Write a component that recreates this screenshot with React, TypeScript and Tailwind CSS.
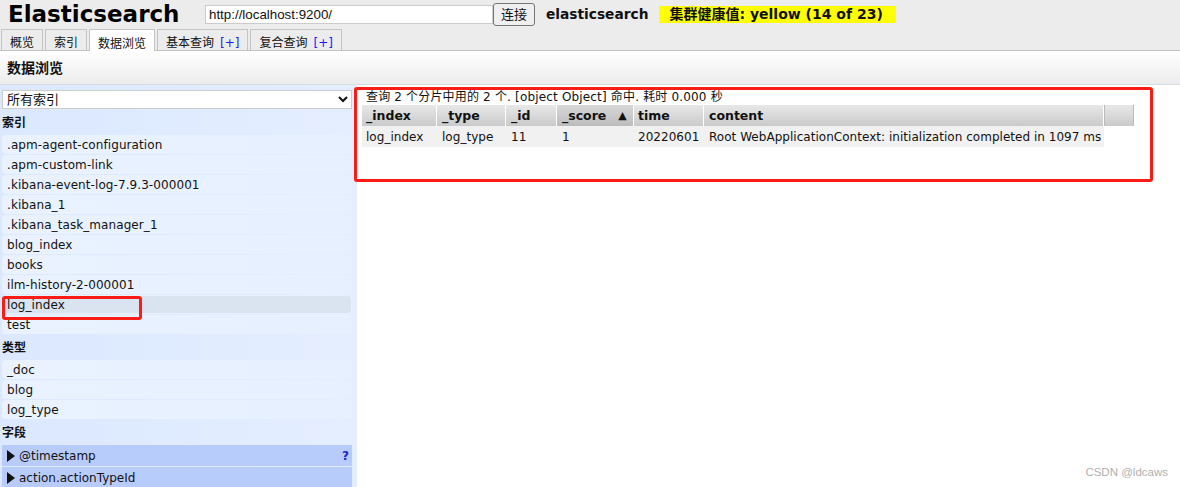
const sans = "font-['DejaVu_Sans','Noto_Sans_CJK_SC',sans-serif]";

const indices = [
  ".apm-agent-configuration",
  ".apm-custom-link",
  ".kibana-event-log-7.9.3-000001",
  ".kibana_1",
  ".kibana_task_manager_1",
  "blog_index",
  "books",
  "ilm-history-2-000001",
  "log_index",
  "test",
];
const types = ["_doc", "blog", "log_type"];

function Tab({ label, plus, active }: { label: string; plus?: boolean; active?: boolean }) {
  return (
    <div
      className={`h-[21px] pt-[6px] px-[8px] border border-b-0 border-[#c4c4c4] flex items-center text-[12px] leading-none ${
        active ? "bg-white h-[22px] -mb-px z-10" : "bg-[#ececec]"
      }`}
    >
      {label}
      {plus && <span className="ml-[6px] text-[#1a1aff]">[+]</span>}
    </div>
  );
}

function ListItem({ name, active }: { name: string; active?: boolean }) {
  return (
    <div
      className={`h-[19px] ml-[2px] mr-[5px] mb-px flex items-center rounded-[4px] text-[12px] tracking-[0.08px] ${
        active ? "pl-[4px] bg-[#dae4f0] border border-[#e9f1fd]" : "pl-[5px] bg-gradient-to-r from-[#eaf2ff] to-[#e6f0ff]"
      }`}
    >
      {name}
    </div>
  );
}

function SectionTitle({ children }: { children: string }) {
  return <div className="h-[23px] pl-[2px] pb-[2px] flex items-center text-[12px] font-bold">{children}</div>;
}

function FieldRow({ name, help }: { name: string; help?: boolean }) {
  return (
    <div className="h-[21px] ml-[2px] mr-[5px] mb-[1px] bg-[#b8ccfc] flex items-center pl-[5px] pr-[3px] text-[12px]">
      <svg width="8" height="12" viewBox="0 0 8 12" className="mr-[4px] shrink-0">
        <path d="M0 0L8 6L0 12Z" fill="#111" />
      </svg>
      <span className="flex-1">{name}</span>
      {help && <span className="text-[#2222cc] font-bold">?</span>}
    </div>
  );
}

const headers = [
  { label: "_index", w: "w-[74px] pl-[4px]" },
  { label: "_type", w: "w-[68px] pl-[5px]" },
  { label: "_id", w: "w-[50px] pl-[5px]" },
  { label: "_score", w: "w-[76px] pl-[5px]", sorted: true },
  { label: "time", w: "w-[69px] pl-[4px]" },
  { label: "content", w: "w-[399px] pl-[5px]" },
];
const cells = ["log_index", "log_type", "11", "1", "20220601", "Root WebApplicationContext: initialization completed in 1097 ms"];

export default function App() {
  return (
    <div className={`relative w-[1180px] h-[487px] overflow-hidden bg-white text-[#111] ${sans}`}>
      {/* Header */}
      <div className="h-[51px] bg-[#ececec] border-b border-[#c4c4c4] flex flex-col">
        <div className="h-[30px] flex items-center">
          <h1 className="pl-[8px] w-[205px] text-[23px] leading-none font-bold text-black font-['DejaVu_Sans',sans-serif]">
            Elasticsearch
          </h1>
          <input
            readOnly
            value="http://localhost:9200/"
            className="w-[288px] h-[19px] bg-white border border-[#cccccc] px-[3px] text-[13.33px] font-['Liberation_Sans',sans-serif] outline-none"
          />
          <button className="w-[42px] h-[23px] bg-[#efefef] border border-[#767676] rounded-[3px] text-[13px]">
            连接
          </button>
          <span className="ml-[11px] text-[13.75px] font-bold">elasticsearch</span>
          <span className="ml-[11px] h-[17px] w-[237px] bg-[#ffff00] pl-[10px] flex items-center text-[14px] font-bold whitespace-pre">
            集群健康值: yellow (14 of 23)
          </span>
        </div>
        <div className="flex gap-[2px] pl-[1px] items-end mt-auto">
          <Tab label="概览" />
          <Tab label="索引" />
          <Tab label="数据浏览" active />
          <Tab label="基本查询" plus />
          <Tab label="复合查询" plus />
        </div>
      </div>

      {/* Title bar */}
      <div className="h-[34px] pl-[7px] pt-[2px] flex items-center text-[14px] font-bold bg-gradient-to-b from-white to-[#ececec] border-b border-[#d8dde3]">
        数据浏览
      </div>

      <div className="flex">
        {/* Sidebar */}
        <div className="w-[357px] h-[402px] bg-gradient-to-r from-[#dbe8fe] to-[#e4eeff] pt-[5px] shrink-0">
          <select className="block ml-[2px] w-[350px] h-[19px] bg-white border border-[#cccccc] text-[13px] mb-[3px]">
            <option>所有索引</option>
          </select>
          <SectionTitle>索引</SectionTitle>
          {indices.map((n) => (
            <ListItem key={n} name={n} active={n === "log_index"} />
          ))}
          <div className="h-[2px]" />
          <SectionTitle>类型</SectionTitle>
          {types.map((n) => (
            <ListItem key={n} name={n} />
          ))}
          <div className="h-[2px]" />
          <SectionTitle>字段</SectionTitle>
          <FieldRow name="@timestamp" help />
          <FieldRow name="action.actionTypeId" />
        </div>

        {/* Results */}
        <div className="pl-[5px] pt-[4px] text-[12px]">
          <div className="h-[16px] pl-[4px] flex items-center whitespace-nowrap tracking-[0.17px]">
            查询 2 个分片中用的 2 个. [object Object] 命中. 耗时 0.000 秒
          </div>
          <div className="flex h-[21px]">
            {headers.map((h) => (
              <div
                key={h.label}
                className={`${h.w} shrink-0 mr-px pt-[2px] flex items-center font-bold text-[12.5px] bg-gradient-to-b ${
                  h.sorted ? "from-[#d8d8d8] to-[#bcbcbc]" : "from-[#e8e8e8] to-[#cacaca]"
                }`}
              >
                {h.label}
                {h.sorted && <span className="ml-[12px] text-[11px]">▲</span>}
              </div>
            ))}
            <div className="w-[30px] border-x border-[#bbbbbb] bg-gradient-to-b from-[#e8e8e8] to-[#cacaca]" />
          </div>
          <div className="flex h-[21px] w-[742px] bg-[#f1f1f1]">
            {cells.map((c, i) => (
              <div key={c} className={`${headers[i].w} shrink-0 mr-px flex items-center whitespace-nowrap tracking-[0.03px]`}>
                {c}
              </div>
            ))}
          </div>
        </div>
      </div>

      {/* Red annotation boxes */}
      <div className="absolute left-[354px] top-[87px] w-[799px] h-[95px] border-[3px] border-[#fb1c16] rounded-[3px]" />
      <div className="absolute left-[2px] top-[296px] w-[140px] h-[24px] border-[3px] border-[#fb1c16] rounded-[3px]" />

      {/* Watermark */}
      <div className="absolute right-[12px] bottom-[6px] text-[11.5px] text-[#b0b0b0] font-['Liberation_Sans',sans-serif]">
        CSDN @ldcaws
      </div>
    </div>
  );
}
